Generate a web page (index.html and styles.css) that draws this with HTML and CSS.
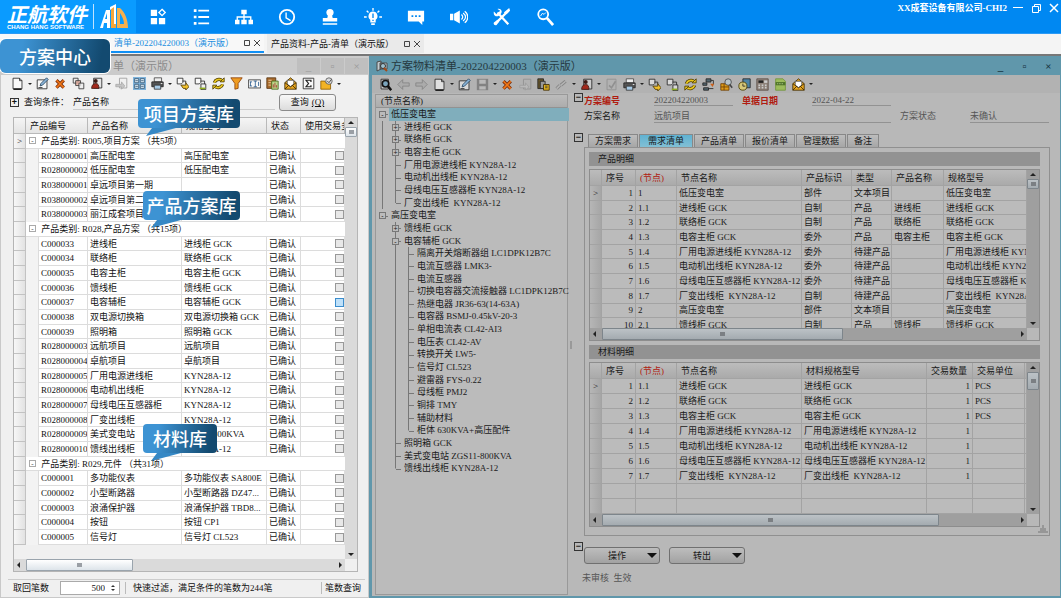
FILE: index.html
```html
<!DOCTYPE html>
<html lang="zh-CN">
<head>
    <meta charset="UTF-8">
    <meta name="viewport" content="width=device-width, initial-scale=1.0">
    <title>正航软件 - 方案物料清单</title>
    <link rel="stylesheet" href="styles.css">
</head>
<body>

    <!-- 图标 -->
    <svg class="sprite" aria-hidden="true">
        <symbol id="i-new" viewBox="0 0 16 16"><path d="M2.500 1.500h8l3 3v10h-11z" fill="#fff" fill-opacity=".6" stroke="#222"/><path d="M10.500 1.500v3h3" fill="none" stroke="#222"/><path d="M13 15H3" stroke="#222" stroke-width="2"/></symbol>
        <symbol id="i-edit" viewBox="0 0 16 16"><path d="M1.500 3.500h12v11h-12z" fill="#fff" fill-opacity=".5" stroke="#222"/><path d="M5 11l1-3 7-7 2 2-7 7z" fill="#8ab4d8" stroke="#26445e"/><path d="M3 13h5" stroke="#222"/></symbol>
        <symbol id="i-del" viewBox="0 0 16 16"><path d="M3 4l9 9M12 4L3 13" stroke="#7a2a08" stroke-width="4"/><path d="M3 4l9 9M12 4L3 13" stroke="#f07818" stroke-width="2"/></symbol>
        <symbol id="i-copy" viewBox="0 0 16 16"><g fill="#eee" fill-opacity=".8" stroke="#333"><path d="M1.500 1.500h6v6h-6z"/><path d="M4.500 4.500h6v6h-6z" fill="#e9b0a0"/><path d="M8.500 7.500h6v7h-6z"/></g></symbol>
        <symbol id="i-user" viewBox="0 0 16 16"><path d="M4.500 1.500h10v12h-10z" fill="#ddd" fill-opacity=".6" stroke="#222"/><circle cx="7" cy="5" r="2.500" fill="#3c1b14"/><path d="M2 14c0-4 2-6 5-6s4 2 4 6z" fill="#a3291b" stroke="#3c1b14"/></symbol>
        <symbol id="i-doc" viewBox="0 0 16 16"><path d="M5.500 1.500h9v12h-9z" fill="none" stroke="#888"/><path d="M1 9h7V6l4 5-4 4v-3H1z" fill="#bbb" stroke="#999"/></symbol>
        <symbol id="i-tick" viewBox="0 0 16 16"><path d="M2.500 1.500h11v13h-11z" fill="none" stroke="#888"/><path d="M5 9l3 3 5-8" fill="none" stroke="#888" stroke-width="2"/></symbol>
        <symbol id="i-grid" viewBox="0 0 16 16"><path d="M0 0h16v16H0z" fill="#7fb4dc"/><path d="M2 2h5v5H2zM9 2h5v5H9zM2 9h5v5H2zM9 9h5v5H9z" fill="#d8e8f2" stroke="#385a78"/><path d="M3 4.500h3M10 4.500h3M3 11.500h3M10 11.500h3" stroke="#385a78"/></symbol>
        <symbol id="i-print" viewBox="0 0 16 16"><path d="M4 1h9v5H4z" fill="#eee" stroke="#444"/><path d="M1 6h14v6H1z" fill="#555" stroke="#222"/><path d="M4 10h8v5H4z" fill="#a8cbe6" stroke="#333"/><path d="M12 8h2" stroke="#fff"/></symbol>
        <symbol id="i-down" viewBox="0 0 16 16"><path d="M1.500 1.500h7v5l-2 2h-5z" fill="#fff" fill-opacity=".5" stroke="#222"/><path d="M8 5h4v3" fill="none" stroke="#222"/><path d="M6 10h6V7l4 5-4 4v-2H9z" fill="#f1c02a" stroke="#4b3500"/></symbol>
        <symbol id="i-up" viewBox="0 0 16 16"><path d="M1.500 1.500h7v5l-2 2h-5z" fill="#fff" fill-opacity=".5" stroke="#222"/><path d="M8 5h5v4" fill="none" stroke="#222"/><path d="M8.500 8.500h6v7h-6z" fill="#eee" fill-opacity=".6" stroke="#222"/><path d="M7 14h7" stroke="#8fae1e" stroke-width="2"/></symbol>
        <symbol id="i-sync" viewBox="0 0 16 16"><path d="M3 7c1-4 6-5 9-3M13 9c-1 4-6 5-9 3" fill="none" stroke="#4b3a00" stroke-width="4"/><path d="M3 7c1-4 6-5 9-3M13 9c-1 4-6 5-9 3" fill="none" stroke="#e8c61e" stroke-width="2"/><path d="M10 6h5V1zM6 10H1v5z" fill="#e8c61e" stroke="#4b3a00"/></symbol>
        <symbol id="i-funnel" viewBox="0 0 16 16"><path d="M1 1h14L10 8v6l-4 1V8z" fill="#ef9c22" stroke="#8a3d08"/></symbol>
        <symbol id="i-text" viewBox="0 0 16 16"><path d="M.500 3.500h15v10H.500z" fill="#fff" fill-opacity=".5" stroke="#333"/><path d="M3 6v5M2 6h3M2 11h3M9 5v7M7 5h4M7 12h4M13 6v5" stroke="#24568a"/></symbol>
        <symbol id="i-chart" viewBox="0 0 16 16"><path d="M1 1h11v13H1z" fill="#a86a2c" stroke="#553311"/><path d="M3 4h4M3 7h3M3 10h3" stroke="#f5ddb2"/><path d="M7 5h8v10H7z" fill="#bcd68a" stroke="#44691c"/><path d="M9 13V9M11 13V7M13 13v-3" stroke="#a33"/></symbol>
        <symbol id="i-mail" viewBox="0 0 16 16"><path d="M1 7l7-6 7 6v8H1z" fill="#e9a720" stroke="#3b2900"/><path d="M4 4h8v5l-4 3-4-3z" fill="#fff" stroke="#555"/><path d="M1 7l7 5 7-5M1 15l5-5M15 15l-5-5" fill="none" stroke="#3b2900"/></symbol>
        <symbol id="i-sum" viewBox="0 0 16 16"><path d="M1.500 1.500h13v13h-13z" fill="#fff" fill-opacity=".5" stroke="#222"/><path d="M11 6V4H5l3 4-3 4h6v-2" fill="none" stroke="#222" stroke-width="1.500"/></symbol>
        <symbol id="i-folder" viewBox="0 0 16 16"><path d="M1 5h5l1 2h6v8H1z" fill="#f2b325" stroke="#8a5a00"/><circle cx="11" cy="5" r="4" fill="#ddd" stroke="#555"/><path d="M9 5l2 2 3-4" fill="none" stroke="#333"/></symbol>
        <symbol id="i-find" viewBox="0 0 16 16"><path d="M2.500 1.500h9v12h-9z" fill="#ccc" stroke="#222"/><circle cx="8" cy="7" r="4" fill="#7ba5bd" stroke="#111" stroke-width="2"/><path d="M11 10l4 5" stroke="#111" stroke-width="3"/></symbol>
        <symbol id="i-prev" viewBox="0 0 16 16"><path d="M1 8l6-6v4h8v4H7v4z" fill="#aaa" stroke="#777"/></symbol>
        <symbol id="i-next" viewBox="0 0 16 16"><path d="M15 8L9 2v4H1v4h8v4z" fill="#aaa" stroke="#777"/></symbol>
        <symbol id="i-save" viewBox="0 0 16 16"><path d="M1 1h14v14H1z" fill="#777"/><path d="M4 2h8v5H4zM4 10h8v4H4z" fill="#bbb"/></symbol>
        <symbol id="i-paste" viewBox="0 0 16 16"><path d="M1 1h7v12H1z" fill="#66562c" stroke="#222"/><path d="M4 4h6v9H4z" fill="#999" stroke="#222"/><path d="M8 8h7v7H8z" fill="#e0b11d" stroke="#3b2900"/><path d="M10 10h3M10 12h3" stroke="#333"/></symbol>
        <symbol id="i-link" viewBox="0 0 16 16"><path d="M2 13l4-4M7 9l6-5" stroke="#777" stroke-width="4"/><path d="M2 13l4-4M7 9l6-5" stroke="#b5b5b5" stroke-width="2"/></symbol>
        <symbol id="i-flow" viewBox="0 0 16 16"><path d="M5 1h6v4H5zM1 6h5v3H1zM2 12h6v3H2z" fill="#52666f" stroke="#222"/><path d="M11 3h3v5M8 13h6" stroke="#222" fill="none"/><path d="M10 7h5l-2 4z" fill="#c9601c"/></symbol>
        <symbol id="i-boxfind" viewBox="0 0 16 16"><path d="M1 7h10v8H1z" fill="#dd9c1b" stroke="#6e3d00"/><path d="M1 11h10M5 7v8" stroke="#6e3d00"/><circle cx="10" cy="5" r="4" fill="#b7c3c8" stroke="#444"/><path d="M12 8l3 4" stroke="#444" stroke-width="2"/></symbol>
        <symbol id="i-time" viewBox="0 0 16 16"><path d="M6 1h9v11H6z" fill="#4c83a5" stroke="#222"/><circle cx="6" cy="10" r="5" fill="#d6c878" stroke="#443a00"/><path d="M6 7v3h3" fill="none" stroke="#222"/></symbol>
        <symbol id="i-calc" viewBox="0 0 16 16"><path d="M1 1h14v14H1z" fill="#8e837a" stroke="#5b4e46"/><path d="M3 3h6v3H3z" fill="#222"/><path d="M10 3h4v3h-4z" fill="#ccc"/><path d="M3 9h10M3 12h10" stroke="#ccc" stroke-width="2" stroke-dasharray="2 2"/></symbol>
        <symbol id="i-green" viewBox="0 0 16 16"><path d="M2 1h9l3 3v11H2z" fill="#9cbc5c" stroke="#70933a"/><path d="M2 5h12v4H2z" fill="#50752a"/><path d="M4 7h8" stroke="#cfe0aa" stroke-dasharray="1 1"/></symbol>
    </svg>

    <header class="topbar">
        <div class="logo">
            <div class="logo-text">
                <strong>正航软件</strong>
                <small>CHANG HANG SOFTWARE</small>
            </div>
            <svg class="logo-mark" viewBox="0 0 29 26" aria-hidden="true">
                <path d="M0 24L6 6h4v18H7v-5H4l-1 5zM5 15h2V9z" fill="#fff" fill-rule="evenodd"/>
                <path d="M11 3l5-2v23h-5z" fill="#f6a63a"/>
                <path d="M17 4h3c5 4 8 12 8 20H17zM20 9v11h4c0-4-2-8-4-11z" fill="#f6b04e" fill-rule="evenodd"/>
                <path d="M10 3l6-3v20h-2V3l-4 3z" fill="#fff"/>
            </svg>
        </div>
        <nav class="topnav">
            <button type="button" aria-label="应用"><svg viewBox="0 0 20 20"><path d="M2 2h7v7H2zM2 11h7v7H2zM11 11h7v7h-7z" fill="#fff"/><path d="M14.500 1.500l3.500 3.500-3.500 3.500L11 5z" fill="none" stroke="#fff" stroke-width="1.500"/></svg></button>
            <button type="button" aria-label="列表"><svg viewBox="0 0 20 20"><path d="M2 3h3M2 10h3M2 17h3" stroke="#fff" stroke-width="3"/><path d="M7 3h12M7 10h12M7 17h12" stroke="#fff" stroke-width="2"/></svg></button>
            <button type="button" aria-label="组织"><svg viewBox="0 0 20 20"><path d="M7 2h6v5H7zM0 13h5v5H0zM7 13h6v5H7zM15 13h5v5h-5z" fill="#fff"/><path d="M10 6v8M2.500 14v-4h15v4" fill="none" stroke="#fff" stroke-width="1.500"/></svg></button>
            <button type="button" aria-label="时间"><svg viewBox="0 0 20 20"><circle cx="10" cy="10" r="8" fill="none" stroke="#fff" stroke-width="2"/><path d="M9 5v6l5 3" fill="none" stroke="#fff" stroke-width="1.500"/></svg></button>
            <button type="button" aria-label="审批"><svg viewBox="0 0 20 20"><circle cx="10" cy="5" r="4" fill="#fff"/><path d="M8 7h4l1 4h5v4H2v-4h5zM2 17h16v1.500H2z" fill="#fff"/></svg></button>
            <button type="button" aria-label="提示"><svg viewBox="0 0 20 20"><path d="M10 4a5 5 0 0 1 3 9v3H7v-3a5 5 0 0 1 3-9zM8 17h4v2H8z" fill="#fff"/><path d="M10 6v5M10 13v1.500" stroke="#0088f2" stroke-width="1.500"/><path d="M10 0v3M3 3l2 2M17 3l-2 2M0 10h3M17 10h3" stroke="#fff" stroke-width="1.500"/></svg></button>
            <button type="button" aria-label="消息"><svg viewBox="0 0 20 20"><path d="M1 3h18v12h-2v4l-4-4H1z" fill="#fff"/><path d="M5 9h2M9 9h2M13 9h2" stroke="#0088f2" stroke-width="2"/></svg></button>
            <button type="button" aria-label="公告"><svg viewBox="0 0 22 20"><path d="M0 6h4v8H0zM5 6l7-4v16l-7-4z" fill="#fff"/><path d="M14 7c2 2 2 4 0 6M16 5c4 3 4 7 0 10M18 3c5 4 5 10 0 14" fill="none" stroke="#fff" stroke-width="1.500"/></svg></button>
            <button type="button" aria-label="工具"><svg viewBox="0 0 20 20"><path d="M5 5l12 13M17 3L4 16" stroke="#fff" stroke-width="2.500"/><path d="M1 4l3 3 4-4-3-2c3-1 6 2 4 5l-3 3c-3 1-6-1-5-5zM19 3l-4 4-3-2 6-5zM1 16l4-3 2 2-3 4c-2 1-4-1-3-3z" fill="#fff"/></svg></button>
            <button type="button" aria-label="搜索"><svg viewBox="0 0 20 20"><circle cx="8" cy="7" r="5.500" fill="none" stroke="#fff" stroke-width="2"/><path d="M12 11l7 8" stroke="#fff" stroke-width="3"/><path d="M5 9l2-3 2 1 2-2" fill="none" stroke="#fff"/></svg></button>
        </nav>
        <div class="account">XX成套设备有限公司-CHI2</div>
        <div class="winctl">
            <button type="button" aria-label="最小化"><svg viewBox="0 0 10 10"><path d="M0 4.500h10" stroke="#fff"/></svg></button>
            <button type="button" aria-label="还原"><svg viewBox="0 0 10 10"><path d="M1.500 3.500h6v6h-6zM3.500 3V1.500h6v6H8" fill="none" stroke="#fff"/></svg></button>
            <button type="button" aria-label="关闭"><svg viewBox="0 0 10 10"><path d="M1 1l8 8M9 1L1 9" stroke="#fff" stroke-width="1.500"/></svg></button>
        </div>
    </header>

    <div class="doctabs">
        <button type="button" class="doctab active">清单-202204220003（演示版）<svg viewBox="0 0 18 8"><path d="M1.500 1.500h5v5h-5zM11 1l6 6M17 1l-6 6" fill="none" stroke="#444"/></svg></button>
        <button type="button" class="doctab">产品资料-产品-清单（演示版）<svg viewBox="0 0 18 8"><path d="M1.500 1.500h5v5h-5zM11 1l6 6M17 1l-6 6" fill="none" stroke="#444"/></svg></button>
        <div class="callout center">方案中心</div>
    </div>

    <main class="desk">
        <!-- 左侧：产品资料 -->
        <section class="win left">
            <div class="title">
                <h2>单（演示版）</h2>
                <div class="mdi"><button type="button">_</button><button type="button">▫</button><button type="button">×</button></div>
            </div>
            <div class="toolbar" id="leftTools"></div>
            <div class="query">
                <button type="button" class="expand" aria-label="展开">+</button>
                <label for="cond">查询条件：</label>
                <input type="text" id="cond" value="产品名称">
                <button type="button" class="btn">查询<u>(Q)</u></button>
            </div>
            <div class="grid main-grid">
                <div class="view">
                    <table>
                        <colgroup><col class="w12"><col class="w13"><col class="w49"><col class="w94"><col class="w85"><col class="w34"><col></colgroup>
                        <thead><tr><th></th><th colspan="2">产品编号</th><th>产品名称</th><th>规格型号</th><th>状态</th><th>使用交易多</th></tr></thead>
                        <tbody id="products"></tbody>
                    </table>
                </div>
                <div class="vbar"><i class="up"></i><b></b><i class="dn"></i></div>
                <div class="hbar"><i class="lt"></i><b></b><i class="rt"></i></div>
                <div class="corner"></div>
                <div class="callout tail c1">项目方案库</div>
                <div class="callout tail c2">产品方案库</div>
                <div class="callout tail c3">材料库</div>
            </div>
            <div class="footer">
                <label for="limit">取回笔数</label>
                <span class="spin"><input type="text" id="limit" value="500"><svg viewBox="0 0 6 8"><path d="M1 3l2-2 2 2zM1 5l2 2 2-2z" fill="#333"/></svg></span>
                <span class="note">快速过滤，满足条件的笔数为244笔</span>
                <button type="button">笔数查询</button>
            </div>
        </section>

        <!-- 右侧：方案物料清单 -->
        <section class="win right">
            <div class="title">
                <svg viewBox="0 0 12 12"><path d="M1 2l4-1v8l-4 2zM4 3h7v6H4z" fill="#c3ccd0" stroke="#4a4a4a"/><circle cx="7" cy="6" r="2.500" fill="#9fc1ce" stroke="#333"/><path d="M8 8l3 3" stroke="#a34b1a" stroke-width="2"/></svg>
                <h2>方案物料清单-202204220003（演示版）</h2>
                <div class="mdi"><button type="button">_</button><button type="button">▫</button><button type="button">×</button></div>
            </div>
            <div class="toolbar" id="rightTools"></div>
            <div class="content">
                <div class="tree">
                    <div class="tree-head">(节点名称)</div>
                    <ul id="tree"></ul>
                </div>
                <div class="split"></div>
                <div class="detail">
                    <span class="fold">−</span>
                    <form class="fields">
                        <label class="req" for="f1">方案编号</label><input id="f1" value="202204220003" readonly>
                        <label class="req" for="f2">单据日期</label><input id="f2" value="2022-04-22" readonly>
                        <label class="newrow" for="f3">方案名称</label><input id="f3" class="wide" value="远航项目" readonly>
                        <label class="soft" for="f4">方案状态</label><input id="f4" value="未确认" readonly>
                    </form>
                    <span class="fold">−</span>
                    <div class="tabs">
                        <div class="tabrow">
                            <button type="button">方案需求</button><button type="button" class="active">需求清单</button><button type="button">产品清单</button><button type="button">报价清单</button><button type="button">管理数据</button><button type="button">备注</button>
                        </div>
                        <div class="page">
                            <h3>产品明细</h3>
                            <div class="grid sub-grid">
                                <div class="view">
                                    <table class="t-prod">
                                        <colgroup><col class="w12"><col class="w34"><col class="w41"><col class="w125"><col class="w50"><col class="w40"><col class="w52"><col></colgroup>
                                        <thead><tr><th></th><th>序号</th><th class="req">(节点)</th><th>节点名称</th><th>产品标识</th><th>类型</th><th>产品名称</th><th>规格型号</th></tr></thead>
                                        <tbody id="items"></tbody>
                                    </table>
                                </div>
                                <div class="vbar"><i class="up"></i><b></b><i class="dn"></i></div>
                                <div class="hbar"><i class="lt"></i><b></b><i class="rt"></i></div>
                                <div class="corner"></div>
                            </div>
                            <h3>材料明细</h3>
                            <div class="grid sub-grid">
                                <div class="view">
                                    <table class="t-mat">
                                        <colgroup><col class="w12"><col class="w34"><col class="w41"><col class="w125"><col class="w125"><col class="w46"><col class="w52"><col></colgroup>
                                        <thead><tr><th></th><th>序号</th><th class="req">(节点)</th><th>节点名称</th><th>材料规格型号</th><th>交易数量</th><th>交易单位</th><th></th></tr></thead>
                                        <tbody id="materials"></tbody>
                                    </table>
                                </div>
                                <div class="vbar tall"><i class="up"></i><b></b><i class="dn"></i></div>
                                <div class="hbar long"><i class="lt"></i><b></b><i class="rt"></i></div>
                                <div class="corner"></div>
                            </div>
                            <svg class="grip" viewBox="0 0 10 10"><path d="M1 9V7M3 9V4M5 9V1M7 9V4M9 9V7" stroke="#777"/></svg>
                        </div>
                    </div>
                    <span class="fold">−</span>
                    <div class="actions">
                        <button type="button" class="btn"><span>操作</span><i></i></button>
                        <button type="button" class="btn"><span>转出</span><i></i></button>
                    </div>
                    <p class="state">未审核&nbsp; 生效</p>
                </div>
            </div>
        </section>
    </main>

    <script src="script.js"></script>
</body>
</html>
```
FILE: styles.css
```css
* {
    box-sizing: border-box;
}
body {
    display: flex;
    flex-direction: column;
    height: 100vh;
    margin: 0;
    overflow: hidden;
    background: #f4f4f4;
    color: #111;
    font: 9px/12px "Liberation Serif", "Noto Sans CJK SC", sans-serif;
}
button, input {
    margin: 0;
    padding: 0;
    border: 0;
    background: none;
    color: inherit;
    font: inherit;
}
button {
    cursor: pointer;
    white-space: nowrap;
}
h2, h3, p, ul {
    margin: 0;
    padding: 0;
    font-weight: normal;
}
.sprite {
    display: none;
}

/* 顶部 */
.topbar {
    display: flex;
    flex: none;
    height: 34px;
    background: #0088f2;
    border-bottom: 1px solid #2b9af5;
    color: #fff;
}
.logo {
    display: flex;
    gap: 6px;
    width: 136px;
    padding: 4px 0 0 7px;
    background: #0a9bff;
}
.logo-text {
    display: flex;
    flex-direction: column;
    height: 25px;
    padding-right: 6px;
    border-right: 1px solid #bfe3ff;
    white-space: nowrap;
}
.logo-text strong {
    font: italic 700 20px/20px "Noto Sans CJK SC", sans-serif;
}
.logo-text small {
    font: bold 6px/6px "Liberation Sans", sans-serif;
}
.logo-mark {
    width: 29px;
    height: 26px;
}
.topnav {
    display: flex;
}
.topnav button {
    display: flex;
    align-items: center;
    justify-content: center;
    width: 43px;
}
.topnav svg {
    width: 18px;
    height: 18px;
}
.account {
    margin-left: auto;
    padding-top: 2px;
    font-weight: bold;
}
.winctl {
    display: flex;
    gap: 8px;
    align-items: flex-start;
    padding: 3px 2px 0 6px;
}
.winctl svg {
    display: block;
    width: 10px;
    height: 10px;
}

/* 文档标签 */
.doctabs {
    position: relative;
    display: flex;
    flex: none;
    gap: 3px;
    height: 22px;
    padding-bottom: 1px;
    background: #f4f4f4;
    border-bottom: 2px solid #777;
}
.doctab {
    display: flex;
    align-items: center;
    justify-content: space-between;
    width: 157px;
    padding: 0 3px 0 4px;
    background: #eaeaea;
}
.doctab.active {
    width: 264px;
    padding-left: 114px;
    background: #f8f8f8;
    border-bottom: 2px solid #1090f5;
    color: #1a8fe0;
}
.doctab svg {
    width: 18px;
    height: 8px;
}
.callout {
    position: absolute;
    z-index: 2;
    border-radius: 4px;
    background: linear-gradient(100deg, #3d93d3 20%, #134a70 90%);
    color: #fff;
    font: 500 18px/29px "Noto Sans CJK SC", sans-serif;
    text-align: center;
    white-space: nowrap;
}
.callout.center {
    left: 0;
    top: 5px;
    width: 110px;
    border-radius: 6px;
    box-shadow: 0 0 0 1px #fff;
    line-height: 34px;
}
.callout.tail::after {
    content: "";
    position: absolute;
    left: 8px;
    top: 100%;
    width: 30px;
    height: 8px;
    background: #3588c5;
    clip-path: polygon(20% 0, 100% 0, 0 100%);
}
.c1 {
    left: 124px;
    top: -19px;
    width: 102px;
}
.c2 {
    left: 129px;
    top: 73px;
    width: 97px;
}
.c3 {
    left: 129px;
    top: 306px;
    width: 74px;
}

/* 窗口 */
.desk {
    display: flex;
    flex: 1;
    min-height: 0;
}
.win {
    display: flex;
    flex-direction: column;
    min-width: 0;
}
.left {
    flex: none;
    width: 369px;
    padding: 0 3px 1px;
    background: #f0f0f0;
    border: 1px solid #c9c9c9;
    border-top: 0;
}
.right {
    flex: 1;
    padding: 0 3px 1px;
    background: #b8b8b8;
    border: 2px solid #6097ab;
    border-width: 0 1px 2px 3px;
    color: #191919;
}
.title {
    display: flex;
    flex: none;
    align-items: center;
    height: 19px;
    margin: 0 -3px;
    font-size: 11px;
}
.title h2 {
    font-size: 11px;
}
.title svg {
    width: 12px;
    height: 12px;
    margin: 0 3px 0 4px;
}
.left .title {
    padding-left: 112px;
    background: #cbcbcb;
    color: #8b8b8b;
}
.right .title {
    background: #6097ab;
    color: #263940;
}
.mdi {
    display: flex;
    gap: 1px;
    height: 16px;
    margin-left: auto;
}
.mdi button {
    width: 23px;
}
.left .mdi button {
    background: #bfbfbf;
    color: #999;
}
.right .mdi button {
    color: #17343f;
    font-weight: bold;
}
.toolbar {
    display: flex;
    flex: none;
    align-items: center;
    height: 17px;
    padding-left: 4px;
}
.right .toolbar {
    height: 18px;
    margin: 0 -3px;
    background: #b2b2b2;
}
.toolbar button {
    display: flex;
    justify-content: center;
    width: 18px;
}
.toolbar svg {
    width: 13px;
    height: 13px;
}
.toolbar .off {
    opacity: .8;
}
.toolbar .caret {
    width: 7px;
    padding-top: 2px;
}
.caret::before {
    content: "";
    border: 2px solid transparent;
    border-top-color: #222;
}

/* 查询条件 */
.query {
    display: flex;
    align-items: center;
    flex: none;
    height: 20px;
    padding-left: 6px;
}
.expand, .fold {
    width: 9px;
    height: 9px;
    border: 1px solid #333;
    font: bold 9px/7px "Liberation Sans", sans-serif;
    text-align: center;
}
.query label {
    width: 49px;
    margin-left: 5px;
    white-space: nowrap;
}
.query input {
    width: 202px;
    height: 15px;
    border-bottom: 1px solid #ccc;
}
.btn {
    height: 17px;
    border: 1px solid #8a8a8a;
    border-radius: 3px;
    background: linear-gradient(#f8f8f8, #dcdcdc);
}
.query .btn {
    width: 57px;
    margin-left: 4px;
}
.query u {
    margin-left: 3px;
}

/* 表格 */
.grid {
    position: relative;
    display: grid;
    grid-template: minmax(0, 1fr) 12px / minmax(0, 1fr) 12px;
    border: 1px solid #b5b5b5;
}
.main-grid {
    flex: 1;
    min-height: 0;
    margin: 5px 7px 7px 9px;
}
.main-grid .view {
    padding-bottom: 14px;
}
.view {
    min-height: 0;
    overflow: hidden;
}
table {
    width: 100%;
    height: 100%;
    table-layout: fixed;
    border-collapse: separate;
    border-spacing: 0;
}
th, td {
    padding: 0 0 0 2px;
    overflow: hidden;
    border-right: 1px solid #dcdcdc;
    border-bottom: 1px solid #dcdcdc;
    background: #fff;
    text-align: left;
    white-space: pre;
}
th {
    height: 16px;
    padding-left: 4px;
    border-color: #b9b9b9;
    background: linear-gradient(#f5f5f5, #e4e4e4);
    font-weight: normal;
}
td:first-child {
    padding: 0;
    border-color: #c2c2c2;
    background: linear-gradient(90deg, #f7f7f7, #e2e2e2);
    text-align: center;
}
td.pad {
    border-bottom: 0;
    background: #f3f3f3;
}
td.num {
    padding-right: 2px;
    text-align: right;
}
.grouprow td:last-child {
    border-right: 0;
}
.grouprow button {
    width: 7px;
    height: 7px;
    margin: 0 3px 0 1px;
    border: 1px solid #aaa;
    font-size: 7px;
    line-height: 4px;
    vertical-align: 1px;
}
td input {
    display: block;
    appearance: none;
    width: 9px;
    height: 9px;
    margin-left: auto;
    border: 1px solid #999;
    background: #e8e8e8;
}
td input.hot {
    border-color: #3c8dcc;
    background: #bfe1fa;
}
.w12 { width: 12px; }
.w13 { width: 13px; }
.w34 { width: 34px; }
.w40 { width: 40px; }
.w41 { width: 41px; }
.w46 { width: 46px; }
.w49 { width: 49px; }
.w50 { width: 50px; }
.w52 { width: 52px; }
.w85 { width: 85px; }
.w94 { width: 94px; }
.w125 { width: 125px; }

/* 滚动条 */
.vbar, .hbar {
    display: flex;
    align-items: center;
    background: #dadada;
}
.vbar {
    flex-direction: column;
    padding: 3px 0;
}
.hbar {
    padding: 0 3px;
}
.vbar i, .hbar i {
    border: 3px solid transparent;
}
.vbar .up { margin-bottom: 3px; border-top-width: 0; border-bottom-color: #222; }
.vbar .dn { margin-top: auto; border-bottom-width: 0; border-top-color: #222; }
.hbar .lt { margin-right: 6px; border-left-width: 0; border-right-color: #222; }
.hbar .rt { margin-left: auto; border-right-width: 0; border-left-color: #222; }
.vbar b, .hbar b {
    display: flex;
    align-items: center;
    justify-content: center;
    border: 1px solid #9aa4ad;
    border-radius: 1px;
    background: linear-gradient(#fff, #dde4ea);
}
.vbar b::before, .hbar b::before {
    content: "";
    width: 5px;
    height: 4px;
    background: #9a9fa5;
}
.vbar b {
    width: 12px;
    height: 10px;
}
.vbar.tall b {
    height: 18px;
}
.hbar b {
    width: 107px;
    height: 12px;
}

/* 左侧底栏 */
.footer {
    display: flex;
    flex: none;
    align-items: center;
    height: 17px;
    margin-left: 4px;
    padding-left: 5px;
    border-top: 1px solid #ccc;
}
.footer .spin {
    display: flex;
    align-items: center;
    width: 60px;
    height: 14px;
    margin: 0 5px 0 11px;
    border: 1px solid #aaa;
    background: #fff;
}
.spin input {
    width: 44px;
    text-align: right;
}
.spin svg {
    width: 6px;
    height: 8px;
    margin-left: 5px;
}
.note {
    padding-left: 7px;
    border-left: 1px solid #bbb;
}
.footer button {
    margin-left: auto;
    padding: 0 4px 0 3px;
    border-left: 1px solid #bbb;
}

/* 节点树 */
.content {
    display: flex;
    flex: 1;
    min-height: 0;
    padding-top: 1px;
}
.tree {
    flex: none;
    width: 193px;
    border: 1px solid #999;
    background: #bbb;
}
.tree-head {
    height: 13px;
    padding-left: 5px;
    border-bottom: 1px solid #929292;
    background: linear-gradient(#bcbcbc, #acacac);
    line-height: 12px;
}
.tree ul {
    display: grid;
    grid-auto-rows: 1fr;
    height: 367px;
    list-style: none;
}
.tree li {
    display: flex;
    align-items: stretch;
    min-height: 0;
    white-space: pre;
}
.tree li > span {
    flex: 1;
    margin-right: 4px;
    padding-left: 2px;
}
.tree li.sel > span {
    background: #80aebc;
}
.tree i {
    position: relative;
    flex: none;
    width: 13px;
}
.tree .v, .tree .t {
    background: linear-gradient(#777, #777) 6px 0 / 1px 100% no-repeat;
}
.tree .l {
    background: linear-gradient(#777, #777) 6px 0 / 1px 50% no-repeat;
}
.tree .t::after, .tree .l::after, .tree .box::after {
    content: "";
    position: absolute;
    left: 7px;
    top: 50%;
    width: 5px;
    border-top: 1px solid #777;
}
.tree .box button {
    position: absolute;
    z-index: 1;
    left: 3px;
    top: 3px;
    width: 7px;
    height: 7px;
    border: 1px solid #777;
    background: #bbb;
    font: 7px/5px "Liberation Sans", sans-serif;
}
.split {
    width: 6px;
    background: linear-gradient(#999, #999) center / 2px 8px no-repeat;
}

/* 明细 */
.detail {
    display: grid;
    flex: 1;
    grid-template-columns: 10px minmax(0, 1fr);
    grid-template-rows: 40px 409px auto auto;
    min-width: 0;
    padding-right: 8px;
    align-content: start;
}
.fold {
    margin-top: -1px;
}
.fields {
    display: grid;
    grid-template-columns: 70px 79px 79px 79px 79px 1fr;
    grid-template-rows: 12px 14px;
    row-gap: 3px;
    align-content: start;
}
.fields label {
    padding-top: 1px;
    white-space: nowrap;
}
.fields input + label {
    padding-left: 9px;
}
.fields .newrow {
    grid-column: 1;
    padding: 1px 0 0;
}
.fields input + label.newrow {
    padding-left: 0;
}
.fields input {
    min-width: 0;
    border-bottom: 1px solid #929292;
    color: #555;
}
.fields .wide {
    grid-column: 2 / 5;
}
.fields .soft {
    color: #555;
}
.fields label.req, th.req {
    color: #b01b10;
}
.fields .req {
    font-weight: bold;
}
.tabrow {
    display: flex;
    gap: 1px;
    height: 13px;
    padding-left: 4px;
}
.tabrow button {
    width: 50px;
    border: 1px solid #888;
    border-bottom: 0;
    background: linear-gradient(#bdbdbd, #a6a6a6);
    line-height: 11px;
}
.tabrow button:last-child {
    width: 32px;
}
.tabrow .active {
    width: 54px;
    background: linear-gradient(#5fb2d2, #82bfd4);
}
.page {
    position: relative;
    margin-right: -1px;
    padding: 4px 9px 8px 4px;
    border: 1px solid #909090;
}
.page h3 {
    height: 14px;
    padding-left: 9px;
    background: #929292;
    font-size: 9px;
    line-height: 14px;
}
.sub-grid {
    height: 172px;
    margin: 3px 0 4px;
    border-color: #8d8d8d;
}
.sub-grid:nth-of-type(2) {
    height: 165px;
    margin-bottom: 0;
}
.t-prod {
    height: 163px;
}
.right th, .right td {
    border-color: #a3a3a3;
    background: #bbb;
}
.right th {
    background: linear-gradient(#bcbcbc, #aaa);
}
.right td:first-child {
    background: linear-gradient(90deg, #b6b6b6, #a6a6a6);
}
.right .vbar, .right .hbar {
    background: #9f9f9f;
}
.right .vbar b, .right .hbar b {
    border-color: #7d858b;
    background: linear-gradient(#bcc2c6, #a4abb0);
}
.right .vbar b::before, .right .hbar b::before {
    background: #7b7f83;
}
.right .hbar b {
    width: 241px;
}
.right .hbar.long b {
    width: 337px;
}
.grip {
    position: absolute;
    right: 1px;
    bottom: 1px;
    width: 10px;
    height: 10px;
}
.actions {
    display: flex;
    gap: 9px;
    padding-top: 4px;
}
.actions .btn {
    display: flex;
    align-items: center;
    width: 76px;
    padding: 0 2px 0 23px;
    border-color: #707070;
    background: linear-gradient(#bdbdbd, #a2a2a2);
}
.actions .btn i {
    margin-left: auto;
    border: 5px solid transparent;
    border-top-color: #111;
    border-bottom: 0;
}
.state {
    grid-column: 1 / 3;
    padding: 8px 0 0 8px;
    color: #555;
}
```
FILE: script.js
```js
const leftTools = 'new ^ edit del copy user ^ -doc grid print ^ down up sync funnel text chart mail sum folder ^';
const rightTools = 'find -prev -next new ^ edit -save ^ del -doc paste -link ^ user ^ -tick print ^ down up sync flow boxfind time calc green mail ^';

function renderTools(id, list) {
    document.getElementById(id).innerHTML = list.split(' ').map(function(name) {
        if (name === '^') {
            return '<button type="button" class="caret" aria-label="更多"></button>';
        }
        const off = name[0] === '-';
        const icon = name.replace('-', '');
        return `<button type="button" class="${off ? 'off' : ''}" aria-label="${icon}"><svg><use href="#i-${icon}"/></svg></button>`;
    }).join('');
}

// 产品列表，按类别分组
const groups = [
    ['产品类别: R005,项目方案 （共5项）', [
        ['R028000001', '高压配电室', '高压配电室'],
        ['R028000002', '低压配电室', '低压配电室'],
        ['R038000001', '卓远项目第一期', ''],
        ['R038000002', '卓远项目第二期', ''],
        ['R038000003', '丽江成套项目', '']
    ]],
    ['产品类别: R028,产品方案 （共15项）', [
        ['C000033', '进线柜', '进线柜 GCK'],
        ['C000034', '联络柜', '联络柜 GCK'],
        ['C000035', '电容主柜', '电容主柜 GCK'],
        ['C000036', '馈线柜', '馈线柜 GCK'],
        ['C000037', '电容辅柜', '电容辅柜 GCK'],
        ['C000038', '双电源切换箱', '双电源切换箱 GCK'],
        ['C000039', '照明箱', '照明箱 GCK'],
        ['R028000003', '远航项目', '远航项目'],
        ['R028000004', '卓航项目', '卓航项目'],
        ['R028000005', '厂用电源进线柜', 'KYN28A-12'],
        ['R028000006', '电动机出线柜', 'KYN28A-12'],
        ['R028000007', '母线电压互感器柜', 'KYN28A-12'],
        ['R028000008', '厂变出线柜', 'KYN28A-12'],
        ['R028000009', '美式变电站', 'ZGS11-800KVA'],
        ['R028000010', '馈线出线柜', 'KYN28A-12']
    ]],
    ['产品类别: R029,元件 （共31项）', [
        ['C000001', '多功能仪表', '多功能仪表 SA800E'],
        ['C000002', '小型断路器', '小型断路器 DZ47...'],
        ['C000003', '浪涌保护器', '浪涌保护器 TBD8...'],
        ['C000004', '按钮', '按钮 CP1'],
        ['C000005', '信号灯', '信号灯 CL523']
    ]]
];

let html = '';
groups.forEach(function(group, g) {
    html += `<tr class="grouprow"><td>${g === 0 ? '&gt;' : ''}</td><td colspan="6"><button type="button" aria-label="折叠">-</button> ${group[0]}</td></tr>`;
    group[1].forEach(function(p) {
        const hot = p[0] === 'C000037' ? 'hot' : '';
        html += `<tr><td></td><td class="pad"></td><td>${p[0]}</td><td>${p[1]}</td><td>${p[2]}</td><td>已确认</td><td><input type="checkbox" class="${hot}" aria-label="使用交易"></td></tr>`;
    });
});
document.getElementById('products').innerHTML = html;

// 需求清单明细
const items = [
    ['1', '低压变电室', '部件', '文本项目', ''],
    ['1.1', '进线柜 GCK', '自制', '产品', '进线柜'],
    ['1.2', '联络柜 GCK', '自制', '产品', '联络柜'],
    ['1.3', '电容主柜 GCK', '委外', '产品', '电容主柜'],
    ['1.4', '厂用电源进线柜 KYN28A-12', '委外', '待建产品', ''],
    ['1.5', '电动机出线柜 KYN28A-12', '委外', '待建产品', ''],
    ['1.6', '母线电压互感器柜 KYN28A-12', '委外', '待建产品', ''],
    ['1.7', '厂变出线柜  KYN28A-12', '自制', '待建产品', ''],
    ['2', '高压变电室', '部件', '文本项目', ''],
    ['2.1', '馈线柜 GCK', '自制', '产品', '馈线柜']
];
document.getElementById('items').innerHTML = items.map(function(r, i) {
    return `<tr><td>${i === 0 ? '&gt;' : ''}</td><td class="num">${i + 1}</td><td>${r[0]}</td><td>${r[1]}</td><td>${r[2]}</td><td>${r[3]}</td><td>${r[4]}</td><td>${r[1]}</td></tr>`;
}).join('');

html = items.slice(1, 8).map(function(r, i) {
    return `<tr><td>${i === 0 ? '&gt;' : ''}</td><td class="num">${i + 1}</td><td>${r[0]}</td><td>${r[1]}</td><td>${r[1]}</td><td class="num">1</td><td>${i < 3 ? 'PCS' : ''}</td><td></td></tr>`;
}).join('');
const blank = '<tr>' + '<td>&nbsp;</td>'.repeat(8) + '</tr>';
document.getElementById('materials').innerHTML = html + blank + blank;

// 节点树：v 竖线, t 分支, l 末支, _ 空, + - 展开/折叠
const nodes = [
    ['-', '低压变电室'],
    ['v+', '进线柜 GCK'],
    ['v+', '联络柜 GCK'],
    ['v+', '电容主柜 GCK'],
    ['vt', '厂用电源进线柜 KYN28A-12'],
    ['vt', '电动机出线柜 KYN28A-12'],
    ['vt', '母线电压互感器柜 KYN28A-12'],
    ['vl', '厂变出线柜  KYN28A-12'],
    ['-', '高压变电室'],
    ['_+', '馈线柜 GCK'],
    ['_-', '电容辅柜 GCK'],
    ['_vt', '隔离开关熔断器组 LC1DPK12B7C'],
    ['_vt', '电流互感器 LMK3-'],
    ['_vt', '电流互感器'],
    ['_vt', '切换电容器交流接触器 LC1DPK12B7C'],
    ['_vt', '热继电器 JR36-63(14-63A)'],
    ['_vt', '电容器 BSMJ-0.45kV-20-3'],
    ['_vt', '单相电流表 CL42-AI3'],
    ['_vt', '电压表 CL42-AV'],
    ['_vt', '转换开关 LW5-'],
    ['_vt', '信号灯 CL523'],
    ['_vt', '避雷器 FYS-0.22'],
    ['_vt', '母线框 PMJ2'],
    ['_vt', '铜排 TMY'],
    ['_vt', '辅助材料'],
    ['_vl', '柜体 630KVA+高压配件'],
    ['_t', '照明箱 GCK'],
    ['_t', '美式变电站 ZGS11-800KVA'],
    ['_l', '馈线出线柜 KYN28A-12']
];
document.getElementById('tree').innerHTML = nodes.map(function(n, i) {
    const cells = n[0].split('').map(function(c) {
        if (c === '+' || c === '-') {
            const line = n[0].length > 1 ? ' v' : '';
            return `<i class="box${line}"><button type="button" aria-label="节点">${c}</button></i>`;
        }
        return `<i class="${c}"></i>`;
    }).join('');
    return `<li class="${i === 0 ? 'sel' : ''}">${cells}<span>${n[1]}</span></li>`;
}).join('');

renderTools('leftTools', leftTools);
renderTools('rightTools', rightTools);
```
